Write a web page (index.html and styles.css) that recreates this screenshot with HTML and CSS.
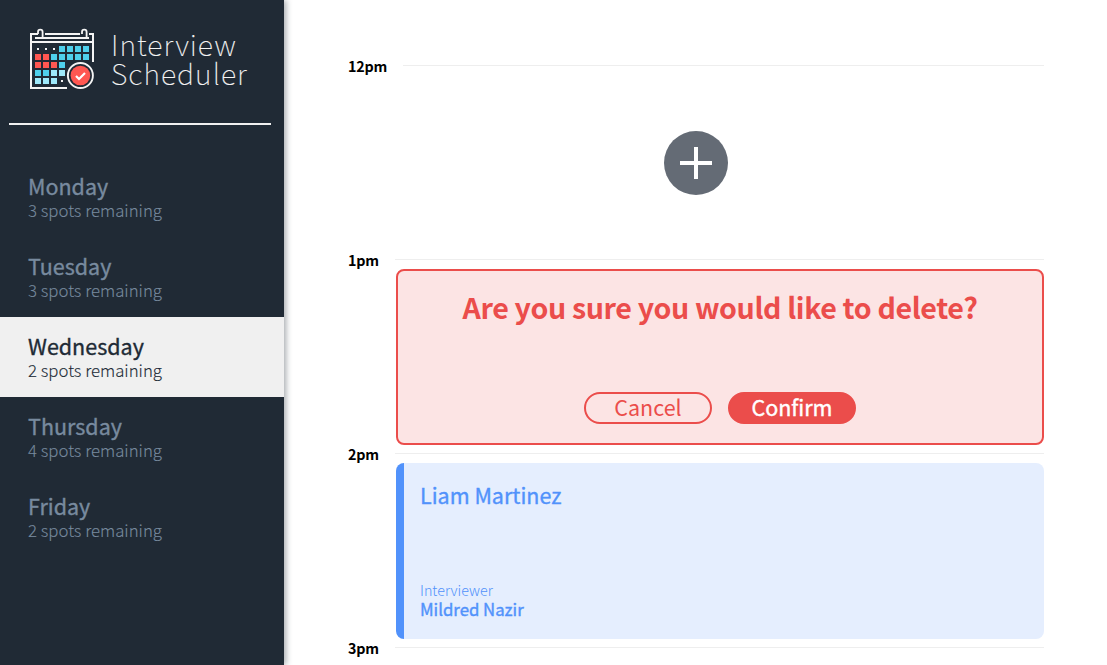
FILE: index.html
```html
<!DOCTYPE html>
<html lang="en">
<head>
<meta charset="utf-8">
<title>Interview Scheduler</title>
<link rel="stylesheet" href="styles.css">
</head>
<body>
<div class="layout">
  <aside class="sidebar">
    <div class="brand">
      <svg class="brand-icon" width="66" height="64" viewBox="0 0 66 64">
        <g fill="none" stroke="#f4f4f4" stroke-width="2">
          <path d="M9 7H2V61H38M16 7H51M60 7H64V35M2 15H64M6 11H60"/>
          <path d="M9 7V5a2.300 2.300 0 0 1 4.600 0V11M53 7V5a2.300 2.300 0 0 1 4.600 0V11" stroke-width="1.800"/>
        </g>
        <path fill="#f4f4f4" d="M8 21h2v2H8zM16 21h2v2h-2zM24 21h2v2h-2zM32 53h2v2h-2z"/>
        <path fill="#4fd0ec" d="M30 19h6v6h-6zM38 19h6v6h-6zM46 19h6v6h-6zM54 19h6v6h-6zM22 27h6v6h-6zM30 27h6v6h-6zM38 27h6v6h-6zM46 27h6v6h-6zM54 27h6v6h-6zM30 35h6v6h-6zM6 43h6v6H6zM14 43h6v6h-6z"/>
        <path fill="#ff5751" d="M6 27h6v6H6zM14 27h6v6h-6zM6 35h6v6H6zM14 35h6v6h-6zM22 35h6v6h-6z"/>
        <path fill="#9ee9fa" d="M22 43h6v6h-6zM30 43h6v6h-6zM6 51h6v6H6zM14 51h6v6h-6zM22 51h6v6h-6z"/>
        <circle cx="51.400" cy="48.500" r="14.600" fill="#202a35"/>
        <circle cx="51.400" cy="48.500" r="9.800" fill="#ff5751"/>
        <circle cx="51.400" cy="48.500" r="12.500" fill="none" stroke="#f4f4f4" stroke-width="1.900"/>
        <path d="M47 49l3 3 6-6" fill="none" stroke="#fff" stroke-width="2.200"/>
      </svg>
      <h1 class="brand-name"><span class="brand-top">Interview</span><span class="brand-bottom">Scheduler</span></h1>
    </div>
    <hr class="divider">
    <ul class="days">
      <li class="day"><h2 class="day-name">Monday</h2><p class="spots">3 spots remaining</p></li>
      <li class="day"><h2 class="day-name">Tuesday</h2><p class="spots">3 spots remaining</p></li>
      <li class="day selected"><h2 class="day-name">Wednesday</h2><p class="spots">2 spots remaining</p></li>
      <li class="day"><h2 class="day-name">Thursday</h2><p class="spots">4 spots remaining</p></li>
      <li class="day"><h2 class="day-name">Friday</h2><p class="spots">2 spots remaining</p></li>
    </ul>
  </aside>
  <main class="schedule">
    <article class="slot">
      <header class="slot-head noon"><h4 class="time">12pm</h4><span class="rule"></span></header>
      <div class="slot-empty">
        <svg class="add" width="64" height="64" viewBox="0 0 64 64"><circle cx="32" cy="32" r="32" fill="#646b75"/><path d="M16 32H48M32 16V48" stroke="#fff" stroke-width="4"/></svg>
      </div>
    </article>
    <article class="slot">
      <header class="slot-head"><h4 class="time">1pm</h4><span class="rule"></span></header>
      <div class="card confirm">
        <h1 class="question">Are you sure you would like to delete?</h1>
        <div class="actions">
          <button class="button outline">Cancel</button>
          <button class="button solid">Confirm</button>
        </div>
      </div>
    </article>
    <article class="slot">
      <header class="slot-head"><h4 class="time">2pm</h4><span class="rule"></span></header>
      <div class="card booked">
        <h2 class="student">Liam Martinez</h2>
        <div class="interviewer">
          <h4 class="role">Interviewer</h4>
          <h3 class="person">Mildred Nazir</h3>
        </div>
      </div>
    </article>
    <article class="slot">
      <header class="slot-head"><h4 class="time">3pm</h4><span class="rule"></span></header>
    </article>
  </main>
</div>
</body>
</html>
```
FILE: styles.css
```css
* { box-sizing: border-box; margin: 0; padding: 0; }
body { font-family: "Noto Sans CJK SC", "Noto Sans", sans-serif; background: #fff; overflow: hidden; }
.layout { display: flex; height: 665px; overflow: hidden; }
.sidebar { width: 284px; flex: none; height: 665px; background: #202a35; box-shadow: 2px 0 6px rgba(32, 42, 53, .4); }
.brand { display: flex; align-items: flex-start; padding: 27px 0 0 29px; height: 123px; }
.brand-icon { flex: none; }
.brand-name { margin: 2px 0 0 16px; font-size: 28.600px; font-weight: 100; line-height: 29px; color: #f4f4f4; white-space: nowrap; -webkit-text-stroke: .15px; }
.brand-top, .brand-bottom { display: block; letter-spacing: 1.050px; }
.divider { border: 0; height: 2px; width: 262px; margin-left: 9px; background: #f0f0f0; }
.days { list-style: none; padding-top: 32px; }
.day { height: 80px; padding: 15px 28px 0; color: #788a9f; }
.selected { background: #f0f0f0; color: #202a35; }
.day-name { font-size: 21.500px; line-height: 28px; font-weight: 400; white-space: nowrap; -webkit-text-stroke: .35px; }
.spots { font-size: 16.800px; line-height: 20px; font-weight: 300; white-space: nowrap; -webkit-text-stroke: .1px; }
.schedule { width: 760px; padding: 57px 0 0 64px; }
.slot { height: 194px; }
.slot-head { display: flex; height: 18px; }
.time { width: 47px; flex: none; font-size: 14.300px; line-height: 18px; font-weight: 700; letter-spacing: -.2px; color: #000; }
.noon .time { width: 55px; }
.rule { flex: 1; height: 1px; margin-top: 8px; background: #eee; }
.slot-empty { height: 176px; display: flex; align-items: center; justify-content: center; }
.card { height: 176px; width: 648px; margin-left: 48px; border-radius: 8px; }
.confirm { display: flex; flex-direction: column; align-items: center; justify-content: space-between; padding: 16px 0 19px; border: 2px solid #eb4d4b; background: #fce4e4; color: #eb4d4b; }
.question { font-size: 28.600px; line-height: 40px; font-weight: 700; letter-spacing: -.37px; white-space: nowrap; }
.actions { display: flex; gap: 16px; }
.button { width: 128px; height: 32px; padding-bottom: 2px; border: 2px solid #eb4d4b; border-radius: 16px; font-family: inherit; font-size: 21.500px; line-height: 26px; }
.outline { background: transparent; color: #eb4d4b; font-weight: 400; }
.solid { background: #eb4d4b; color: #fff; font-weight: 400; -webkit-text-stroke: .4px; }
.booked { display: flex; flex-direction: column; justify-content: space-between; padding: 17px 16px 20px; border-left: 8px solid #5192fb; background: #e5eefe; color: #5192fb; }
.student { font-size: 21.500px; line-height: 30px; font-weight: 400; -webkit-text-stroke: .35px; }
.role { font-size: 14.300px; line-height: 18px; font-weight: 300; }
.person { font-size: 16.750px; line-height: 20px; font-weight: 400; -webkit-text-stroke: .4px; }
```
